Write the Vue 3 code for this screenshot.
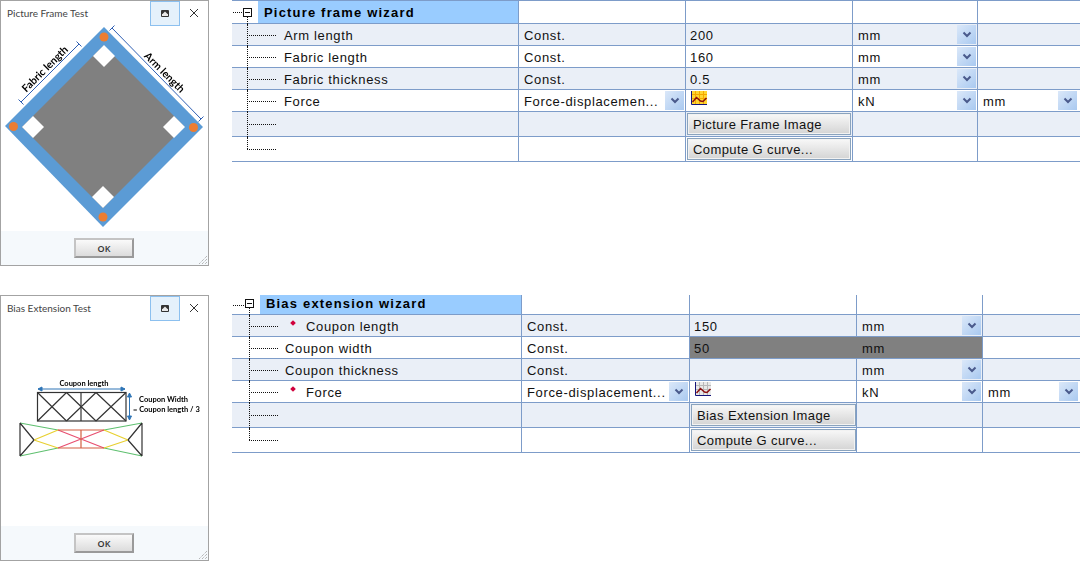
<script setup>
const wizards = [
  {
    id: 'frame',
    dialogTitle: 'Picture Frame Test',
    title: 'Picture frame wizard',
    rows: [
      { name: 'Arm length', method: 'Const.', value: '200', unit: 'mm' },
      { name: 'Fabric length', method: 'Const.', value: '160', unit: 'mm' },
      { name: 'Fabric thickness', method: 'Const.', value: '0.5', unit: 'mm' },
      { name: 'Force', method: 'Force-displacemen...', methodDrop: true, chart: 'hot', unit: 'kN', unit2: 'mm' },
      { button: 'Picture Frame Image', tall: true },
      { button: 'Compute G curve...', tall: true, last: true }
    ]
  },
  {
    id: 'bias',
    dialogTitle: 'Bias Extension Test',
    title: 'Bias extension wizard',
    rows: [
      { name: 'Coupon length', bullet: true, method: 'Const.', value: '150', unit: 'mm' },
      { name: 'Coupon width', method: 'Const.', value: '50', unit: 'mm', selected: true },
      { name: 'Coupon thickness', method: 'Const.', value: '', unit: 'mm' },
      { name: 'Force', bullet: true, method: 'Force-displacement...', methodDrop: true, chart: 'cool', unit: 'kN', unit2: 'mm' },
      { button: 'Bias Extension Image', tall: true },
      { button: 'Compute G curve...', tall: true, last: true }
    ]
  }
]
</script>

<template>
  <div class="page">
    <section v-for="w in wizards" :key="w.id" class="section" :class="w.id">
      <div class="dialog">
        <header class="titlebar">
          <span class="dialog-title">{{ w.dialogTitle }}</span>
          <span class="help">
            <svg width="8" height="7" viewBox="0 0 8 7">
              <rect x="0" y="0" width="8" height="7" rx="1" fill="#333" />
              <polygon points="4,1.500 6.500,4 1.500,4" fill="#e8e8e8" />
              <rect x="1" y="4" width="6" height="2" fill="#e8e8e8" />
            </svg>
          </span>
          <svg class="close" width="10" height="10" viewBox="0 0 10 10">
            <path d="M1 1L9 9M9 1L1 9" stroke="#333" stroke-width="1" fill="none" />
          </svg>
        </header>

        <div class="picture">
          <svg v-if="w.id === 'frame'" width="206" height="206" viewBox="1 26 206 206">
            <polygon points="104,28 203,128 103,228 5,127" fill="#5b9bd5" />
            <polygon points="103.5,46.5 184.5,127.5 103,209 22,128" fill="#808080" />
            <g fill="#fff">
              <polygon points="104,46 115,57 104,68 93,57" />
              <polygon points="33,117 44,128 33,139 22,128" />
              <polygon points="174,117 185,128 174,139 163,128" />
              <polygon points="103,187 114,198 103,209 92,198" />
            </g>
            <g fill="#ed7d31">
              <circle cx="104" cy="38" r="4.500" />
              <circle cx="13.500" cy="127.500" r="4.500" />
              <circle cx="193.500" cy="128.500" r="4.500" />
              <circle cx="103" cy="218" r="4.500" />
            </g>
            <g stroke="#2f5fb3" stroke-width="1" fill="none">
              <path d="M21 103L79 45M18.500 100.500L23.500 105.500M76.500 42.500L81.500 47.500" />
              <path d="M112 29L201 120M114.500 26.500L109.500 31.500M203.500 117.500L198.500 122.500" />
            </g>
            <text class="frame-label" transform="translate(47.500 72.500) rotate(-45)">Fabric length</text>
            <text class="frame-label" transform="translate(162 76) rotate(45)">Arm length</text>
          </svg>

          <svg v-else width="206" height="206" viewBox="1 321 206 206">
            <g stroke="#333" stroke-width="1.200" fill="none">
              <rect x="37.500" y="393.500" width="88.500" height="28.500" />
              <path d="M81 393.500V422" />
              <path d="M37.500 393.500L66.500 422M66.500 393.500L37.500 422" />
              <path d="M66.500 393.500L96 422M66.500 422L96 393.500" />
              <path d="M96 393.500L126 422M96 422L126 393.500" />
            </g>
            <g stroke="#2e75b6" stroke-width="1" fill="#2e75b6">
              <path d="M38 390H125" fill="none" />
              <polygon points="38,390 42,388 42,392" />
              <polygon points="125,390 121,388 121,392" />
              <path d="M129.500 394V421" fill="none" />
              <polygon points="129.500,394 127.500,398 131.500,398" />
              <polygon points="129.500,421 127.500,417 131.500,417" />
            </g>
            <g stroke="#5fc070" stroke-width="1.200" fill="none">
              <path d="M20 424L58 431M20 457L58 449M104 431L142 424M104 449L142 457" />
            </g>
            <g stroke="#e8d030" stroke-width="1.200" fill="none">
              <path d="M34 441L58 431M34 441L58 449M128 441L104 431M128 441L104 449" />
            </g>
            <g stroke="#e84f70" stroke-width="1.200" fill="none">
              <path d="M58 431L104 449M58 449L104 431" />
            </g>
            <g stroke="#d45f42" stroke-width="1.200" fill="none">
              <path d="M58 431H104M58 449H104M81 431V449" />
            </g>
            <g stroke="#333" stroke-width="1.200" fill="none">
              <path d="M20 424V457M20 424L34 441M20 457L34 441M142 424V457M142 424L128 441M142 457L128 441" />
            </g>
            <text class="bias-label" x="84" y="387" text-anchor="middle">Coupon length</text>
            <text class="bias-label" x="139" y="403">Coupon Width</text>
            <text class="bias-label" x="133" y="412.500">= Coupon length / 3</text>
          </svg>
        </div>

        <footer class="dialog-foot">
          <button class="ok" type="button">OK</button>
          <svg class="grip" width="10" height="10" viewBox="0 0 10 10">
            <path d="M9 1L1 9M9 4L4 9M9 7L7 9" stroke="#999" stroke-width="1" stroke-dasharray="1 1" fill="none" />
          </svg>
        </footer>
      </div>

      <div class="grid">
        <div class="row head">
          <div class="cell name-cell head-cell">
            <i class="lead"></i>
            <i class="toggle"></i>
            <span class="head-label">{{ w.title }}</span>
          </div>
          <div class="cell"></div>
          <div class="cell"></div>
          <div class="cell"></div>
          <div class="cell end"></div>
        </div>

        <div v-for="(r, i) in w.rows" :key="i" class="row" :class="{ tall: r.tall, zebra: i % 2 === 0 }">
          <div class="cell name-cell" :class="{ last: r.last }">
            <i class="trunk"></i>
            <i class="branch"></i>
            <i v-if="r.bullet" class="bullet"></i>
            <span v-if="r.name" class="name" :class="{ bulleted: r.bullet }">{{ r.name }}</span>
          </div>

          <div class="cell pad">
            <span class="clip">{{ r.method }}</span>
            <span v-if="r.methodDrop" class="drop">
              <svg width="10" height="7" viewBox="0 0 10 7"><path d="M1.500 1.500L5 5L8.500 1.500" stroke="#4a5a8c" stroke-width="2" fill="none" /></svg>
            </span>
          </div>

          <div class="cell value" :class="{ selected: r.selected, btn: r.button }">
            <button v-if="r.button" class="action" type="button">{{ r.button }}</button>
            <svg v-else-if="r.chart" class="chart" width="17" height="15" viewBox="0 0 17 15">
              <rect x="1" y="0" width="15" height="13" :fill="r.chart === 'hot' ? '#ffd633' : '#e8e8e8'" />
              <path d="M1 3.500H16M1 7.500H16M4.500 0V13M8.500 0V13M12.500 0V13" :stroke="r.chart === 'hot' ? '#f5a800' : '#b8b8b8'" stroke-width="1" fill="none" />
              <path d="M1.500 11L5.500 6.500L9.500 10L12 10.500L15.500 7" stroke="#8c1010" stroke-width="1.500" fill="none" />
              <path d="M.5 0V13.500H16" stroke="#14147a" stroke-width="1" fill="none" />
            </svg>
            <span v-else>{{ r.value }}</span>
          </div>

          <div class="cell pad" :class="{ selected: r.selected }">
            <span>{{ r.unit }}</span>
            <span v-if="r.unit && !r.selected" class="drop">
              <svg width="10" height="7" viewBox="0 0 10 7"><path d="M1.500 1.500L5 5L8.500 1.500" stroke="#4a5a8c" stroke-width="2" fill="none" /></svg>
            </span>
          </div>

          <div class="cell pad end">
            <span>{{ r.unit2 }}</span>
            <span v-if="r.unit2" class="drop">
              <svg width="10" height="7" viewBox="0 0 10 7"><path d="M1.500 1.500L5 5L8.500 1.500" stroke="#4a5a8c" stroke-width="2" fill="none" /></svg>
            </span>
          </div>
        </div>
      </div>
    </section>
  </div>
</template>

<style scoped>
.page {
  width: 1080px;
  height: 561px;
  display: flex;
  flex-direction: column;
  gap: 29px;
  background: #fff;
  overflow: hidden;
}
.section {
  display: flex;
  align-items: flex-start;
  gap: 23px;
}
.dialog {
  position: relative;
  width: 209px;
  height: 266px;
  box-sizing: border-box;
  border: 1px solid #a3a3a3;
  display: flex;
  flex-direction: column;
  flex: none;
  background: #fff;
}
.titlebar {
  height: 24px;
  display: flex;
  align-items: center;
  flex: none;
}
.dialog-title {
  font: 10px "Lato", sans-serif;
  color: #444;
  padding-left: 6px;
  flex: 1;
}
.help {
  width: 30px;
  height: 25px;
  box-sizing: border-box;
  margin-top: 1px;
  border: 1px solid #8cc0ef;
  background: #e5f1fb;
  display: flex;
  align-items: center;
  justify-content: center;
}
.close {
  margin: 0 9px 0 9px;
}
.picture {
  flex: 1;
  filter: blur(0.35px);
}
.picture svg {
  display: block;
}
.frame-label {
  font: bold 10.500px "Lato", sans-serif;
  fill: #000;
  text-anchor: middle;
}
.bias-label {
  font: bold 7.500px "Lato", sans-serif;
  fill: #000;
}
.dialog-foot {
  position: relative;
  height: 34px;
  flex: none;
  background: #f5f9fc;
  display: flex;
  justify-content: center;
  align-items: flex-start;
  padding: 7px 0 0 0;
  box-sizing: border-box;
}
.ok {
  width: 60px;
  height: 20px;
  padding: 0;
  margin-right: 1px;
  border: 2px solid #a9a9a9;
  border-color: #c4c4c4 #9a9a9a #9a9a9a #c4c4c4;
  background: linear-gradient(#fafafa, #dcdcdc);
  font: 600 9px "Open Sans", sans-serif;
  color: #333;
}
.grip {
  position: absolute;
  right: 0;
  bottom: 0;
}

.grid {
  width: 848px;
  flex: none;
  font: 13px "Liberation Sans", sans-serif;
  letter-spacing: 0.65px;
  color: #111;
}
.frame .grid {
  --cols: 287px 167px 167px 125px 102px;
}
.frame .head {
  height: 24px;
  border-top: 1px solid #7d9cc9;
}
.bias .grid {
  --cols: 290px 168px 167px 126px 97px;
}
.bias .head {
  height: 20px;
}
.row {
  display: grid;
  grid-template-columns: var(--cols);
  height: 22px;
  box-sizing: border-box;
  border-bottom: 1px solid #7d9cc9;
}
.row.tall {
  height: 25px;
}
.row.zebra {
  background: #eaeff7;
}
.cell {
  position: relative;
  border-right: 1px solid #7d9cc9;
  display: flex;
  align-items: center;
  min-width: 0;
  box-sizing: border-box;
}
.cell > span:not(.drop):not(.head-label) {
  margin-top: 2px;
}
.cell.end {
  border-right: 0;
}
.pad {
  padding-left: 5px;
  justify-content: space-between;
}
.clip {
  white-space: nowrap;
  overflow: hidden;
}
.value {
  padding-left: 4px;
}
.value.btn {
  padding: 1px 0 0 1px;
  align-items: stretch;
}
.selected {
  background: #808080;
  border-right-color: #808080;
}
.bias .selected + .selected {
  border-right-color: #7d9cc9;
}
.drop {
  width: 19px;
  height: 19px;
  flex: none;
  margin-right: 1px;
  display: flex;
  align-items: center;
  justify-content: center;
  background: linear-gradient(135deg, #dbe8f9, #a9c9f0);
}
.end .drop {
  margin-right: 3px;
}
.bias .end .drop {
  margin-right: 2px;
}
.chart {
  display: block;
  align-self: flex-start;
  margin: 1px 0 0 1px;
}
.action {
  width: 164px;
  height: 22px;
  padding: 0 0 0 5px;
  box-sizing: border-box;
  text-align: left;
  border: 1px solid #8aa3bd;
  box-shadow: inset 0 0 0 1px #f2f2f2;
  background: linear-gradient(#f8f8f8, #d4d4d4);
  font: inherit;
  letter-spacing: 0.4px;
  color: inherit;
}
.bias .action {
  width: 165px;
}

.name-cell {
  padding-left: 52px;
}
.bias .name-cell {
  padding-left: 53px;
}
.trunk {
  position: absolute;
  left: 15px;
  top: 0;
  bottom: -1px;
  border-left: 1px dotted #111;
}
.last .trunk {
  bottom: 50%;
}
.branch {
  position: absolute;
  left: 15px;
  width: 29px;
  top: 50%;
  border-top: 1px dotted #111;
}
.bias .trunk,
.bias .branch {
  left: 17px;
}
.bullet {
  position: absolute;
  left: 59px;
  top: 6px;
  width: 4px;
  height: 4px;
  background: #d0003c;
  transform: rotate(45deg);
}
.bulleted {
  margin-left: 21px;
}
.head-cell,
.bias .head-cell {
  padding-left: 0;
  align-items: stretch;
}
.lead {
  position: absolute;
  left: 1px;
  width: 11px;
  top: 50%;
  border-top: 1px dotted #111;
}
.toggle {
  position: absolute;
  left: 11px;
  top: 7px;
  width: 9px;
  height: 9px;
  background: #fff;
  border: 1px solid #111;
  box-sizing: border-box;
}
.toggle::before {
  content: "";
  position: absolute;
  left: 1px;
  right: 1px;
  top: 3px;
  border-top: 1px solid #111;
}
.toggle::after {
  content: "";
  position: absolute;
  left: 3px;
  top: 8px;
  height: 7px;
  border-left: 1px dotted #111;
}
.bias .toggle {
  left: 13px;
  top: 4px;
}
.bias .lead {
  width: 13px;
}
.head-label {
  margin-left: 26px;
  flex: 1;
  background: #99ccff;
  display: flex;
  align-items: center;
  padding-left: 6px;
  font-weight: bold;
  letter-spacing: 1.18px;
  color: #000;
}
.bias .head-label {
  margin-left: 28px;
  padding-bottom: 2px;
}
</style>
